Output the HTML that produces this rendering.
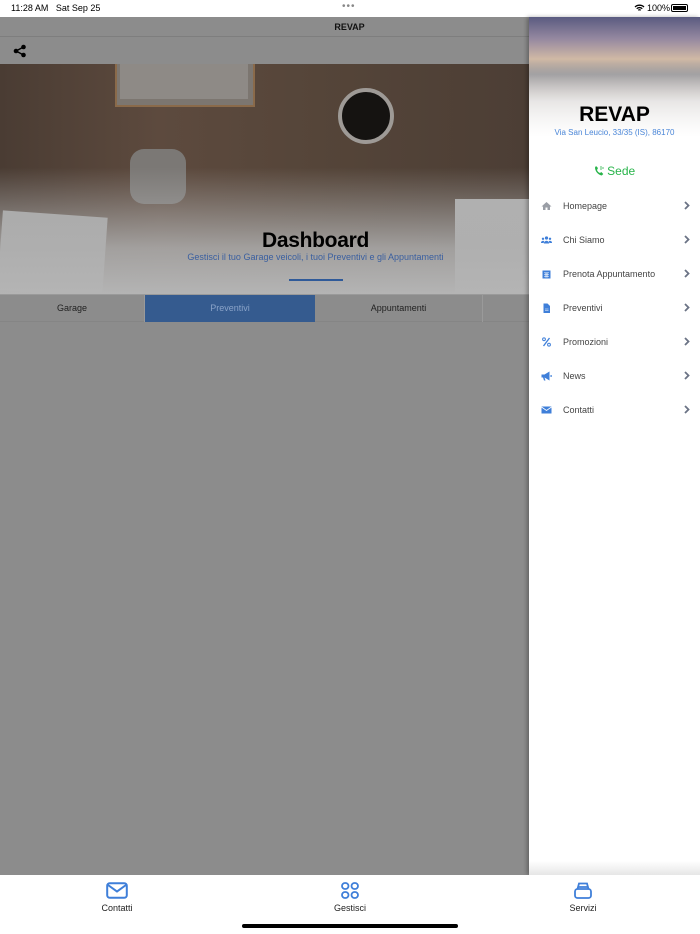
<!DOCTYPE html>
<html><head><meta charset="utf-8"><style>
*{margin:0;padding:0;box-sizing:border-box}
body{width:700px;height:934px;overflow:hidden;position:relative;font-family:"Liberation Sans",sans-serif;background:#fff}
.status{position:absolute;left:0;top:0;width:700px;height:17px;background:#fff;font-size:9px;color:#000}
.main{position:absolute;left:0;top:17px;width:529px;height:858px;background:#8c8c8c}
.nav{position:absolute;left:0;top:0;width:529px;height:20px;border-bottom:1px solid #7e7e7e;text-align:center;font-size:9px;font-weight:bold;line-height:20px;padding-left:170px;color:#111}
.tool{position:absolute;left:0;top:20px;width:529px;height:27px}
.hero{position:absolute;left:0;top:47px;width:529px;height:230px;overflow:hidden;
background:linear-gradient(90deg,#4a3c33,#5d4a3e 30%,#554539 60%,#4c3e35);}
.tabs{position:absolute;left:0;top:277px;width:529px;height:28px;border-top:1px solid #9a9a9a;border-bottom:1px solid #858585;font-size:9px;color:#222}
.tabs div{position:absolute;top:0;height:27px;line-height:27px;text-align:center}
.drawer{position:absolute;left:529px;top:17px;width:171px;height:858px;background:#fff;box-shadow:-2px 0 4px rgba(0,0,0,.3)}
.dimg{position:absolute;left:0;top:0;width:171px;height:120px;background:linear-gradient(180deg,rgba(255,255,255,0) 35%,rgba(255,255,255,.75) 70%,#fff 100%),linear-gradient(180deg,#5a5b80 0%,#9588a0 18%,#d0b9a5 35%,#7f7d80 48%,#9c9490 65%,#c8c4c0 100%)}
.item{position:absolute;left:0;width:171px;height:20px;font-size:9px;color:#444;line-height:20px}
.item svg.i{position:absolute;left:12px;top:5px}
.item span{position:absolute;left:34px}
.item svg.c{position:absolute;right:10px;top:5px}
.bottom{position:absolute;left:0;top:875px;width:700px;height:59px;background:#fff;font-size:9px;color:#222}
.bt{position:absolute;top:7px;width:80px;text-align:center}
.bt div{margin-top:2px}
</style></head><body>
<div class="status">
<span style="position:absolute;left:11px;top:3px">11:28 AM&nbsp;&nbsp; Sat Sep 25</span>
<span style="position:absolute;left:342px;top:1px;letter-spacing:1px;color:#888;font-size:10px">•••</span>
<svg style="position:absolute;left:634px;top:4px" width="11" height="8" viewBox="0 0 11 8"><path d="M1 3a6.5 6.5 0 0 1 9 0M2.7 4.7a4 4 0 0 1 5.6 0M4.3 6.3a1.6 1.6 0 0 1 2.4 0" stroke="#000" stroke-width="1.3" fill="none"/></svg>
<span style="position:absolute;left:647px;top:3px">100%</span>
<div style="position:absolute;left:671px;top:4px;width:17px;height:8px;border:1px solid #000;border-radius:2px;padding:1px"><div style="background:#000;width:100%;height:100%"></div></div>
</div>
<div class="main">
<div class="nav">REVAP</div>
<div class="tool"><svg style="position:absolute;left:13px;top:7px" width="14" height="14" viewBox="0 0 14 14"><circle cx="10.5" cy="3" r="2.3" fill="#000"/><circle cx="3" cy="7" r="2.3" fill="#000"/><circle cx="10.5" cy="11" r="2.3" fill="#000"/><path d="M10.5 3L3 7l7.5 4" stroke="#000" stroke-width="1.4" fill="none"/></svg></div>
<div class="hero">
<div style="position:absolute;left:115px;top:-5px;width:140px;height:48px;background:#7c7670;border:2px solid #8a6a4a"></div>
<div style="position:absolute;left:120px;top:-5px;width:128px;height:40px;background:#8e8a86"></div>
<div style="position:absolute;left:338px;top:24px;width:56px;height:56px;border-radius:50%;background:#151311;border:4px solid #9e9a96"></div>
<div style="position:absolute;left:130px;top:85px;width:56px;height:55px;border-radius:14px;background:#7b7875"></div>
<div style="position:absolute;left:0;top:150px;width:105px;height:80px;background:#a9a9a9;transform:rotate(4deg)"></div>
<div style="position:absolute;left:455px;top:135px;width:80px;height:95px;background:#b0b0b0"></div>
<div style="position:absolute;left:0;top:0;width:529px;height:230px;background:linear-gradient(180deg,rgba(160,160,160,0) 45%,rgba(175,175,175,.85) 80%,#b4b4b4 100%)"></div>
<div style="position:absolute;left:0;width:529px;top:165px;text-align:center;padding-left:102px;font-size:21px;font-weight:bold;color:#000;letter-spacing:-.3px">Dashboard</div>
<div style="position:absolute;left:0;width:529px;top:188px;text-align:center;padding-left:102px;font-size:9px;color:#3a5fa0">Gestisci il tuo Garage veicoli, i tuoi Preventivi e gli Appuntamenti</div>
<div style="position:absolute;left:289px;top:215px;width:54px;height:2px;background:#2f5a99"></div>
</div>
<div class="tabs">
<div style="left:0;width:145px;border-right:1px solid #9a9a9a">Garage</div>
<div style="left:145px;width:170px;background:#355b8f;color:#8aa3c8">Preventivi</div>
<div style="left:315px;width:168px;border-right:1px solid #9a9a9a">Appuntamenti</div>
</div>
</div>
<div class="drawer">
<div class="dimg"></div>
<div style="position:absolute;left:0;width:171px;top:86px;text-align:center;font-size:21px;font-weight:bold;color:#000">REVAP</div>
<div style="position:absolute;left:0;width:171px;top:111px;text-align:center;font-size:8px;color:#4a86d8">Via San Leucio, 33/35 (IS), 86170</div>
<div style="position:absolute;left:0;width:171px;top:147px;text-align:center;font-size:12px;color:#28b44a"><svg width="10" height="11" viewBox="0 0 10 11" style="vertical-align:-1px"><path d="M2 1l2 2-1 2c.5 1.5 1.5 2.5 3 3l1.3-1 2 2-1.5 1.5C4 10 1 6 1 2.5z" fill="#28b44a"/><path d="M7 1v4M9 2v2" stroke="#28b44a" stroke-width=".8"/></svg> Sede</div>
<div class="item" style="top:179px"><svg class="i" width="11" height="10" viewBox="0 0 11 10"><path d="M5.5 1L0.5 5.5h1.5V9h2.5V6.5h2V9H9V5.5h1.5z" fill="#9a9ea6"/></svg><span>Homepage</span><svg class="c" width="6" height="9" viewBox="0 0 6 9"><path d="M1 1l3.5 3.5L1 8" stroke="#6b7385" stroke-width="1.8" fill="none"/></svg></div>
<div class="item" style="top:213px"><svg class="i" width="11" height="10" viewBox="0 0 11 10"><circle cx="5.5" cy="3" r="1.6" fill="#3f7fd9"/><circle cx="2" cy="3.8" r="1.2" fill="#3f7fd9"/><circle cx="9" cy="3.8" r="1.2" fill="#3f7fd9"/><path d="M2.8 8.5a2.7 2.7 0 0 1 5.4 0zM0 8a2 2 0 0 1 3.2-1.8L2.6 8zM11 8a2 2 0 0 0-3.2-1.8L8.4 8z" fill="#3f7fd9"/></svg><span>Chi Siamo</span><svg class="c" width="6" height="9" viewBox="0 0 6 9"><path d="M1 1l3.5 3.5L1 8" stroke="#6b7385" stroke-width="1.8" fill="none"/></svg></div>
<div class="item" style="top:247px"><svg class="i" width="11" height="10" viewBox="0 0 11 10"><rect x="1.5" y="1.5" width="8" height="8" fill="#3f7fd9"/><path d="M3 3.8h5M3 5.6h5M3 7.4h5M4.2 3.5v5M5.5 3.5v5M6.8 3.5v5" stroke="#fff" stroke-width=".5"/></svg><span>Prenota Appuntamento</span><svg class="c" width="6" height="9" viewBox="0 0 6 9"><path d="M1 1l3.5 3.5L1 8" stroke="#6b7385" stroke-width="1.8" fill="none"/></svg></div>
<div class="item" style="top:281px"><svg class="i" width="11" height="10" viewBox="0 0 11 10"><path d="M2.5 0.5h4l2.5 2.5v7h-6.5z" fill="#3f7fd9"/><path d="M4 6h3.5M4 7.5h3.5" stroke="#fff" stroke-width=".6"/></svg><span>Preventivi</span><svg class="c" width="6" height="9" viewBox="0 0 6 9"><path d="M1 1l3.5 3.5L1 8" stroke="#6b7385" stroke-width="1.8" fill="none"/></svg></div>
<div class="item" style="top:315px"><svg class="i" width="11" height="10" viewBox="0 0 11 10"><path d="M8.5 1L2.5 9" stroke="#3f7fd9" stroke-width="1.3"/><circle cx="3" cy="2.3" r="1.4" stroke="#3f7fd9" fill="none"/><circle cx="8" cy="7.7" r="1.4" stroke="#3f7fd9" fill="none"/></svg><span>Promozioni</span><svg class="c" width="6" height="9" viewBox="0 0 6 9"><path d="M1 1l3.5 3.5L1 8" stroke="#6b7385" stroke-width="1.8" fill="none"/></svg></div>
<div class="item" style="top:349px"><svg class="i" width="11" height="10" viewBox="0 0 11 10"><path d="M0.5 3.5h3l5-3v9l-5-3h-3zM2 6.5l1 3h1.5l-1-3zM9.5 4h1.2v2H9.5z" fill="#3f7fd9"/></svg><span>News</span><svg class="c" width="6" height="9" viewBox="0 0 6 9"><path d="M1 1l3.5 3.5L1 8" stroke="#6b7385" stroke-width="1.8" fill="none"/></svg></div>
<div class="item" style="top:383px"><svg class="i" width="11" height="10" viewBox="0 0 11 10"><rect x="0.5" y="1.5" width="10" height="7" fill="#3f7fd9"/><path d="M0.5 2l5 3.5 5-3.5" stroke="#fff" stroke-width=".8" fill="none"/></svg><span>Contatti</span><svg class="c" width="6" height="9" viewBox="0 0 6 9"><path d="M1 1l3.5 3.5L1 8" stroke="#6b7385" stroke-width="1.8" fill="none"/></svg></div>
<div style="position:absolute;left:0;bottom:0;width:171px;height:14px;background:linear-gradient(180deg,#fff,#e6e6e6)"></div>
</div>
<div class="bottom">
<div class="bt" style="left:77px"><svg width="22" height="17" viewBox="0 0 22 17"><rect x="1.2" y="1.2" width="19.6" height="14.6" rx="2.5" stroke="#3f7fd9" stroke-width="2" fill="none"/><path d="M2 3l9 6.5L20 3" stroke="#3f7fd9" stroke-width="2" fill="none"/></svg><div>Contatti</div></div>
<div class="bt" style="left:310px"><svg width="18" height="17" viewBox="0 0 18 17"><rect x="1" y="1" width="6.5" height="6" rx="3" stroke="#3f7fd9" stroke-width="1.8" fill="none"/><rect x="10.5" y="1" width="6.5" height="6" rx="3" stroke="#3f7fd9" stroke-width="1.8" fill="none"/><rect x="1" y="10" width="6.5" height="6" rx="3" stroke="#3f7fd9" stroke-width="1.8" fill="none"/><rect x="10.5" y="10" width="6.5" height="6" rx="3" stroke="#3f7fd9" stroke-width="1.8" fill="none"/></svg><div>Gestisci</div></div>
<div class="bt" style="left:543px"><svg width="18" height="17" viewBox="0 0 18 17"><rect x="1" y="7" width="16" height="9" rx="2.5" stroke="#3f7fd9" stroke-width="1.8" fill="none"/><path d="M3.5 7l1.5-5.5h8L14.5 7M4 5h10" stroke="#3f7fd9" stroke-width="1.8" fill="none"/></svg><div>Servizi</div></div>
<div style="position:absolute;left:242px;top:49px;width:216px;height:4px;border-radius:2px;background:#000"></div>
</div>
</body></html>
